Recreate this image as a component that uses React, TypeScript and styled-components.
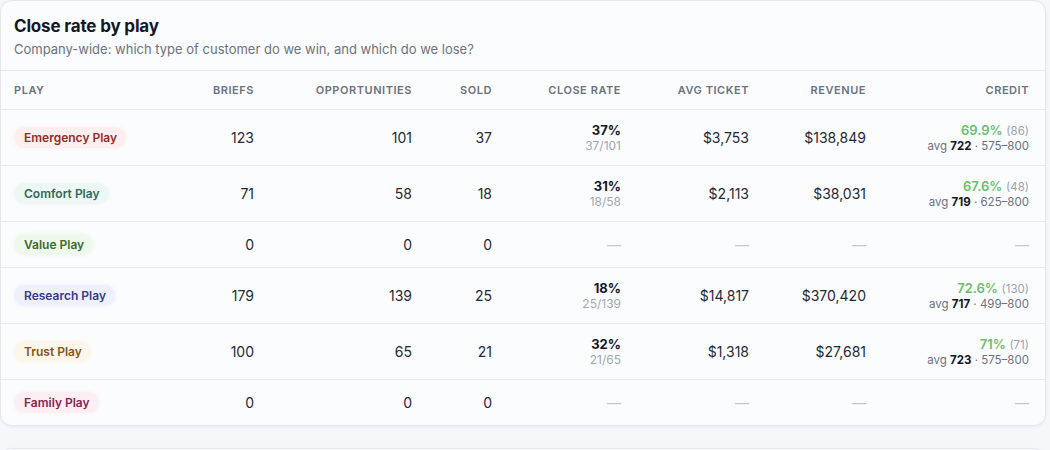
import React from 'react';
import styled, { createGlobalStyle } from 'styled-components';

const GlobalStyle = createGlobalStyle`
  html, body {
    margin: 0;
    padding: 0;
    background: #f6f7f9;
    font-family: Inter, "Liberation Sans", sans-serif;
    color: #1f2937;
  }
`;

const Page = styled.div`
  display: flex;
  flex-direction: column;
  gap: 22px;
  width: 1046px;
`;

const Card = styled.section`
  background: #fbfcfd;
  border: 1px solid #e5e7eb;
  border-radius: 12px;
  box-shadow: 0 1px 3px rgba(15, 23, 42, 0.06);
  overflow: hidden;
`;

const EmptyCard = styled(Card)`
  height: 60px;
`;

const CardHeader = styled.header`
  padding: 14px 13px 12px;
  border-bottom: 1px solid #e7e9ed;
`;

const Title = styled.h2`
  margin: 0;
  font-size: 17px;
  line-height: 22px;
  font-weight: 700;
  color: #111827;
  letter-spacing: -0.01em;
`;

const Subtitle = styled.p`
  margin: 3px 0 0;
  font-size: 13px;
  line-height: 18px;
  color: #6b7280;
`;

const Table = styled.table`
  width: 100%;
  border-collapse: collapse;
  table-layout: fixed;
`;

const Th = styled.th<{ $left?: boolean }>`
  height: 38px;
  padding: 0 16px 0 13px;
  text-align: ${({ $left }) => ($left ? 'left' : 'right')};
  font-size: 11px;
  font-weight: 600;
  letter-spacing: 0.05em;
  text-transform: uppercase;
  color: #6b7280;
  border-bottom: 1px solid #e7e9ed;
`;

const Tr = styled.tr`
  &:not(:last-child) td {
    border-bottom: 1px solid #e7e9ed;
  }
`;

const Td = styled.td<{ $left?: boolean }>`
  padding: 12px 16px 12px 13px;
  text-align: ${({ $left }) => ($left ? 'left' : 'right')};
  font-size: 14px;
  line-height: 18px;
  color: #1f2937;
  vertical-align: middle;
`;

const Pill = styled.span<{ $bg: string; $fg: string }>`
  display: inline-flex;
  align-items: center;
  vertical-align: top;
  height: 21px;
  padding: 0 9px 0 10px;
  border-radius: 999px;
  background: ${({ $bg }) => $bg};
  box-shadow: 0 0 4px ${({ $bg }) => $bg};
  color: ${({ $fg }) => $fg};
  font-size: 12px;
  line-height: 1;
  font-weight: 600;
`;

const Strong = styled.div`
  font-size: 13px;
  line-height: 17px;
  font-weight: 700;
  color: #111827;
`;

const Sub = styled.div`
  font-size: 12px;
  line-height: 14px;
  color: #a3a8b1;
`;

const Dash = styled.span`
  color: #c4c8cf;
`;

const CreditTop = styled.div`
  font-size: 13px;
  line-height: 17px;
`;

const CreditPct = styled.span`
  color: #6cbf6a;
  font-weight: 600;
`;

const CreditCount = styled.span`
  color: #9ca3af;
  font-size: 11.5px;
  line-height: 1;
`;

const CreditLine = styled.div`
  font-size: 11.5px;
  line-height: 14px;
  color: #6b7280;

  b {
    color: #111827;
    font-weight: 700;
  }
`;

interface Credit {
  pct: string;
  count: number;
  avg: number;
  range: string;
}

interface Row {
  play: string;
  bg: string;
  fg: string;
  briefs: number;
  opps: number;
  sold: number;
  rate?: string;
  ratio?: string;
  ticket?: string;
  revenue?: string;
  credit?: Credit;
}

const rows: Row[] = [
  { play: 'Emergency Play', bg: '#fcefee', fg: '#962b2b', briefs: 123, opps: 101, sold: 37, rate: '37%', ratio: '37/101', ticket: '$3,753', revenue: '$138,849', credit: { pct: '69.9%', count: 86, avg: 722, range: '575–800' } },
  { play: 'Comfort Play', bg: '#edf7f4', fg: '#2f6a5b', briefs: 71, opps: 58, sold: 18, rate: '31%', ratio: '18/58', ticket: '$2,113', revenue: '$38,031', credit: { pct: '67.6%', count: 48, avg: 719, range: '625–800' } },
  { play: 'Value Play', bg: '#eff8ec', fg: '#3c6a2b', briefs: 0, opps: 0, sold: 0 },
  { play: 'Research Play', bg: '#eef0fb', fg: '#3a3a8e', briefs: 179, opps: 139, sold: 25, rate: '18%', ratio: '25/139', ticket: '$14,817', revenue: '$370,420', credit: { pct: '72.6%', count: 130, avg: 717, range: '499–800' } },
  { play: 'Trust Play', bg: '#fcf5ea', fg: '#855322', briefs: 100, opps: 65, sold: 21, rate: '32%', ratio: '21/65', ticket: '$1,318', revenue: '$27,681', credit: { pct: '71%', count: 71, avg: 723, range: '575–800' } },
  { play: 'Family Play', bg: '#fbeff3', fg: '#8a2350', briefs: 0, opps: 0, sold: 0 },
];

const widths = [170, 99, 158, 80, 129, 128, 117, 163];

const dash = <Dash>—</Dash>;

export default function App() {
  return (
    <>
      <GlobalStyle />
      <Page>
        <Card>
          <CardHeader>
            <Title>Close rate by play</Title>
            <Subtitle>Company-wide: which type of customer do we win, and which do we lose?</Subtitle>
          </CardHeader>
          <Table>
            <colgroup>
              {widths.map((w, i) => (
                <col key={i} style={{ width: w }} />
              ))}
            </colgroup>
            <thead>
              <tr>
                <Th $left>Play</Th>
                <Th>Briefs</Th>
                <Th>Opportunities</Th>
                <Th>Sold</Th>
                <Th>Close rate</Th>
                <Th>Avg ticket</Th>
                <Th>Revenue</Th>
                <Th>Credit</Th>
              </tr>
            </thead>
            <tbody>
              {rows.map((r) => (
                <Tr key={r.play}>
                  <Td $left>
                    <Pill $bg={r.bg} $fg={r.fg}>{r.play}</Pill>
                  </Td>
                  <Td>{r.briefs}</Td>
                  <Td>{r.opps}</Td>
                  <Td>{r.sold}</Td>
                  <Td>
                    {r.rate ? (
                      <>
                        <Strong>{r.rate}</Strong>
                        <Sub>{r.ratio}</Sub>
                      </>
                    ) : dash}
                  </Td>
                  <Td>{r.ticket ?? dash}</Td>
                  <Td>{r.revenue ?? dash}</Td>
                  <Td>
                    {r.credit ? (
                      <>
                        <CreditTop>
                          <CreditPct>{r.credit.pct}</CreditPct> <CreditCount>({r.credit.count})</CreditCount>
                        </CreditTop>
                        <CreditLine>
                          avg <b>{r.credit.avg}</b> · {r.credit.range}
                        </CreditLine>
                      </>
                    ) : dash}
                  </Td>
                </Tr>
              ))}
            </tbody>
          </Table>
        </Card>
        <EmptyCard />
      </Page>
    </>
  );
}
